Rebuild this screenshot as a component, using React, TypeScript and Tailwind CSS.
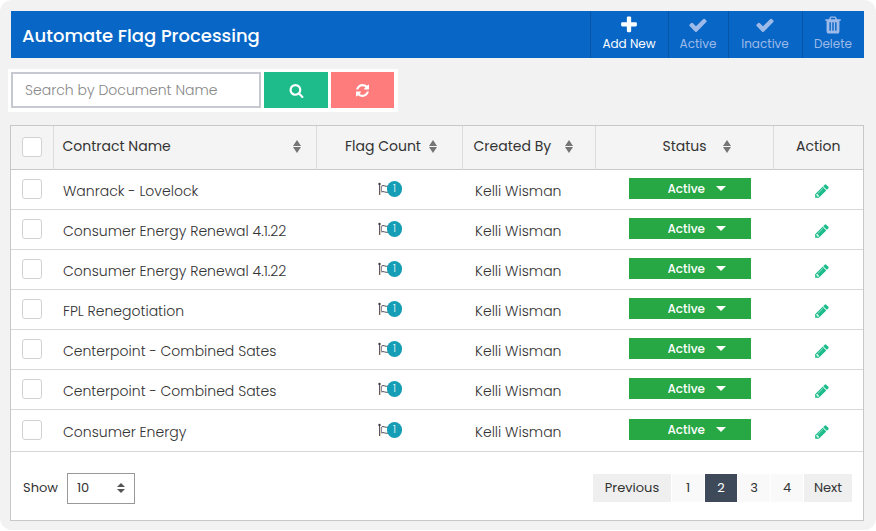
import { useState } from "react";

const icons = {
  plus: "M1600 736v192q0 40-28 68t-68 28h-416v416q0 40-28 68t-68 28h-192q-40 0-68-28t-28-68v-416h-416q-40 0-68-28t-28-68v-192q0-40 28-68t68-28h416v-416q0-40 28-68t68-28h192q40 0 68 28t28 68v416h416q40 0 68 28t28 68z",
  check:
    "M1671 566q0 40-28 68l-724 724-136 136q-28 28-68 28t-68-28l-136-136-362-362q-28-28-28-68t28-68l136-136q28-28 68-28t68 28l294 295 656-657q28-28 68-28t68 28l136 136q28 28 28 68z",
  trash:
    "M704 1376v-704q0-14-9-23t-23-9h-64q-14 0-23 9t-9 23v704q0 14 9 23t23 9h64q14 0 23-9t9-23zm256 0v-704q0-14-9-23t-23-9h-64q-14 0-23 9t-9 23v704q0 14 9 23t23 9h64q14 0 23-9t9-23zm256 0v-704q0-14-9-23t-23-9h-64q-14 0-23 9t-9 23v704q0 14 9 23t23 9h64q14 0 23-9t9-23zm-544-992h448l-48-117q-7-9-17-11h-317q-10 2-17 11zm928 32v64q0 14-9 23t-23 9h-96v948q0 83-47 143.5t-113 60.5h-832q-66 0-113-58.5t-47-141.5v-952h-96q-14 0-23-9t-9-23v-64q0-14 9-23t23-9h309l70-167q15-37 54-63t79-26h320q40 0 79 26t54 63l70 167h309q14 0 23 9t9 23z",
  search:
    "M1216 832q0-185-131.5-316.5t-316.5-131.5-316.5 131.5-131.5 316.5 131.5 316.5 316.5 131.5 316.5-131.5 131.5-316.5zm512 832q0 52-38 90t-90 38q-54 0-90-38l-343-342q-179 124-399 124-143 0-273.5-55.5t-225-150-150-225-55.5-273.5 55.5-273.5 150-225 225-150 273.5-55.5 273.5 55.5 225 150 150 225 55.5 273.5q0 220-124 399l343 343q37 37 37 90z",
  pencil:
    "M491 1536l91-91-235-235-91 91v107h128v128h107zm523-928q0-22-22-22-10 0-17 7l-542 542q-7 7-7 17 0 22 22 22 10 0 17-7l542-542q7-7 7-17zm-54-192l416 416-832 832h-416v-416zm683 96q0 53-37 90l-166 166-416-416 166-165q36-38 90-38 53 0 91 38l235 234q37 39 37 91z",
};

const refreshPath =
  "M1511 928q0 5-1 7-64 268-268 434.5t-478 166.5q-146 0-282.5-55t-243.5-157l-129 129q-19 19-45 19t-45-19-19-45v-448q0-26 19-45t45-19h448q26 0 45 19t19 45-19 45l-137 137q71 66 161 102t187 36q134 0 250-65t186-179q11-17 53-117 8-23 30-23h192q13 0 22.5 9.5t9.5 22.5zm25-800v448q0 26-19 45t-45 19h-448q-26 0-45-19t-19-45 19-45l138-138q-148-137-349-137-134 0-250 65t-186 179q-11 17-53 117-8 23-30 23h-199q-13 0-22.5-9.5t-9.5-22.5v-7q65-268 270-434.5t480-166.5q146 0 284 55.5t245 156.5l130-129q19-19 45-19t45 19 19 45z";

function Icon({ name, className }: { name: keyof typeof icons; className: string }) {
  return (
    <svg viewBox="0 0 1792 1792" fill="currentColor" aria-hidden="true" className={className}>
      <path d={icons[name]} />
    </svg>
  );
}

function SortIcon({ className }: { className: string }) {
  return (
    <svg viewBox="0 0 8 13" fill="currentColor" aria-hidden="true" className={className}>
      <path d="M4 0l4 6H0zM4 13l4-6H0z" />
    </svg>
  );
}

function ToolButton({
  icon,
  label,
  width,
  disabled = false,
}: {
  icon: keyof typeof icons;
  label: string;
  width: string;
  disabled?: boolean;
}) {
  return (
    <button
      type="button"
      disabled={disabled}
      className={`flex ${width} flex-col items-center border-l border-[#0755a6] pt-[4px] pr-px text-[12px] leading-[18px] text-white disabled:text-[#9dbae8]`}
    >
      <Icon name={icon} className="h-[20px] w-[20px]" />
      <span>{label}</span>
    </button>
  );
}

function SortButton({ label, className }: { label: string; className: string }) {
  return (
    <button type="button" className={`flex w-full items-center ${className}`}>
      {label}
      <SortIcon className="h-[13px] w-[8px] text-[#757575]" />
    </button>
  );
}

function TickBox({ label }: { label: string }) {
  return (
    <input
      type="checkbox"
      aria-label={label}
      className="mx-auto block h-[20px] w-[20px] appearance-none rounded-[3px] border border-[#d2d2d2] bg-white checked:bg-[#0866c6]"
    />
  );
}

function FlagCount({ count }: { count: number }) {
  return (
    <div className="flex items-center justify-center" aria-label={`${count} flag`}>
      <svg viewBox="0 0 11 14" fill="none" aria-hidden="true" className="h-[14px] w-[11px]">
        <path d="M1.5 1v12" stroke="#5c5562" />
        <path d="M2.5 4v9" stroke="#d9bd96" strokeWidth=".7" />
        <path d="M3.500 4c2-1.500 4 1.300 7.500 0M3.500 10c2-1.500 4 1.300 7.500 0" stroke="#504c55" />
        <path d="M3.500 4v6" stroke="#8588ad" />
        <circle cx="1.500" cy="2" r="1.200" fill="#3e3a42" />
      </svg>
      <span className="-ml-[2px] flex h-[16px] w-[15px] items-center justify-center rounded-full bg-[#149db4] text-[10px] leading-none text-white">
        {count}
      </span>
    </div>
  );
}

function StatusSelect({ label }: { label: string }) {
  return (
    <div className="mx-auto -mt-px grid w-[122px] items-center">
      <select
        aria-label={label}
        className="col-start-1 row-start-1 h-[21px] w-full appearance-none bg-[#28a745] pl-[39px] text-[12px] leading-[20px] font-medium text-white"
      >
        <option>Active</option>
        <option>Inactive</option>
      </select>
      <svg
        viewBox="0 0 10 5"
        fill="#fff"
        aria-hidden="true"
        className="pointer-events-none col-start-1 row-start-1 mr-[25px] h-[5px] w-[10px] justify-self-end"
      >
        <path d="M0 0h10L5 5z" />
      </svg>
    </div>
  );
}

const contracts = [
  "Wanrack - Lovelock",
  "Consumer Energy Renewal 4.1.22",
  "Consumer Energy Renewal 4.1.22",
  "FPL Renegotiation",
  "Centerpoint - Combined Sates",
  "Centerpoint - Combined Sates",
  "Consumer Energy",
];

const pages = [1, 2, 3, 4];

export default function App() {
  const [page, setPage] = useState(2);

  return (
    <div className="bg-white font-['Poppins','Inter',sans-serif] text-[14px] leading-[20px] text-[#333]">
      <main className="rounded-[12px] bg-[#f2f2f2] pt-[11px] pr-[12px] pb-[9px] pl-[10px]">
        <header className="ml-px flex h-[47px] items-stretch bg-[#0866c6] text-white">
          <h1 className="flex flex-1 items-center pt-[2px] pl-[11px] text-[18px] leading-[28px] font-medium">
            Automate Flag Processing
          </h1>
          <ToolButton icon="plus" label="Add New" width="w-[78px]" />
          <ToolButton icon="check" label="Active" width="w-[60px]" disabled />
          <ToolButton icon="check" label="Inactive" width="w-[74px]" disabled />
          <ToolButton icon="trash" label="Delete" width="w-[62px]" disabled />
        </header>

        <form
          onSubmit={(e) => e.preventDefault()}
          className="mt-[11px] -ml-[2px] flex w-[390px] gap-[3px] bg-white p-[3px] pb-[4px]"
        >
          <input
            type="text"
            aria-label="Search by Document Name"
            placeholder="Search by Document Name"
            className="h-[36px] w-[250px] border-2 border-[#c6cad0] bg-white px-[12px] font-light placeholder:text-[#888]"
          />
          <button
            type="submit"
            aria-label="Search"
            className="flex h-[36px] w-[64px] items-center justify-center bg-[#1dbc8a] text-white"
          >
            <Icon name="search" className="h-[15px] w-[15px]" />
          </button>
          <button
            type="button"
            aria-label="Refresh"
            className="flex h-[36px] w-[63px] items-center justify-center bg-[#ff7c7c] text-white"
          >
            <svg viewBox="0 0 1536 1536" fill="currentColor" aria-hidden="true" className="h-[13px] w-[13px]">
              <path d={refreshPath} />
            </svg>
          </button>
        </form>

        <section className="mt-[13px] border border-[#c8c8c8] bg-white">
          <table className="w-full table-fixed border-collapse">
            <colgroup>
              <col className="w-[42px]" />
              <col />
              <col className="w-[146px]" />
              <col className="w-[133px]" />
              <col className="w-[178px]" />
              <col className="w-[90px]" />
            </colgroup>
            <thead>
              <tr className="h-[43px] border-b border-[#c8c8c8] bg-[#f4f4f4] [&>th]:p-0 [&>th]:font-normal [&>th+th]:border-l [&>th+th]:border-[#dcdcdc] [&>th+th]:pb-[2px]">
                <th scope="col">
                  <TickBox label="Select all contracts" />
                </th>
                <th scope="col">
                  <SortButton label="Contract Name" className="justify-between pr-[15px] pl-[9px]" />
                </th>
                <th scope="col">
                  <SortButton label="Flag Count" className="justify-center gap-[8px] pl-[4px]" />
                </th>
                <th scope="col">
                  <SortButton label="Created By" className="justify-between pr-[22px] pl-[11px]" />
                </th>
                <th scope="col">
                  <SortButton label="Status" className="justify-center gap-[16px] pl-[25px]" />
                </th>
                <th scope="col">Action</th>
              </tr>
            </thead>
            <tbody>
              {contracts.map((name, i) => (
                <tr
                  key={i}
                  className="h-[40px] border-b border-[#d8d8d8] font-light last:h-[42px] [&>td]:p-0"
                >
                  <td>
                    <TickBox label={`Select ${name}`} />
                  </td>
                  <td className="pt-[3px]! pl-[10px]!">{name}</td>
                  <td className="pl-[2px]!">
                    <FlagCount count={1} />
                  </td>
                  <td className="pt-[3px]! pl-[13px]!">Kelli Wisman</td>
                  <td className="pl-[11px]!">
                    <StatusSelect label={`Status of ${name}`} />
                  </td>
                  <td className="pt-[4px]! pl-[8px]!">
                    <button type="button" aria-label={`Edit ${name}`} className="mx-auto block text-[#1dbc8a]">
                      <Icon name="pencil" className="h-[16px] w-[16px]" />
                    </button>
                  </td>
                </tr>
              ))}
            </tbody>
          </table>

          <footer className="flex items-center justify-between pt-[21px] pr-[11px] pb-[16px] pl-[12px] text-[13px]">
            <div className="flex items-center gap-[9px]">
              <label htmlFor="page-size">Show</label>
              <div className="grid items-center">
                <select
                  id="page-size"
                  className="col-start-1 row-start-1 h-[31px] w-[68px] appearance-none border border-[#999] bg-white pl-[9px]"
                >
                  <option>10</option>
                  <option>25</option>
                  <option>50</option>
                </select>
                <svg
                  viewBox="0 0 8 10"
                  fill="#555"
                  aria-hidden="true"
                  className="pointer-events-none col-start-1 row-start-1 mr-[10px] h-[10px] w-[8px] justify-self-end"
                >
                  <path d="M4 0l4 4H0zM4 10l4-4H0z" />
                </svg>
              </div>
            </div>

            <nav aria-label="Pagination" className="flex gap-px">
              <button type="button" className="h-[28px] w-[78px] bg-[#efefef]">
                Previous
              </button>
              {pages.map((n) => (
                <button
                  key={n}
                  type="button"
                  onClick={() => setPage(n)}
                  aria-current={n === page ? "page" : undefined}
                  className="h-[28px] w-[32px] bg-[#f9f9f9] aria-[current=page]:bg-[#3e4a59] aria-[current=page]:text-white"
                >
                  {n}
                </button>
              ))}
              <button type="button" className="h-[28px] w-[48px] bg-[#efefef]">
                Next
              </button>
            </nav>
          </footer>
        </section>
      </main>
    </div>
  );
}
